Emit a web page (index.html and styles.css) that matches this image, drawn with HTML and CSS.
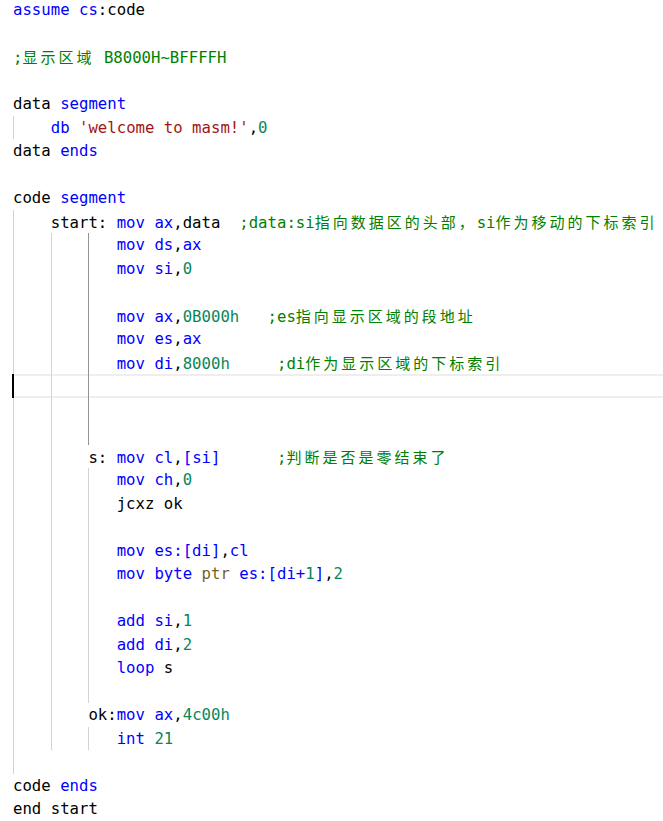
FILE: index.html
```html
<!DOCTYPE html>
<html>
<head>
<meta charset="utf-8">
<link rel="stylesheet" href="styles.css">
</head>
<body>
<div class="editor">
<div class="ln"><span class="t"><span class="k">assume</span> <span class="k">cs</span>:code</span></div>
<div class="ln"></div>
<div class="ln"><span class="t"><span class="c">;<span class="zh">显示区域</span> B8000H~BFFFFH</span></span></div>
<div class="ln"></div>
<div class="ln"><span class="t">data <span class="k">segment</span></span></div>
<div class="ln"><i class="g"></i><span class="t"><span class="k">db</span> <span class="s">'welcome to masm!'</span>,<span class="n">0</span></span></div>
<div class="ln"><span class="t">data <span class="k">ends</span></span></div>
<div class="ln"></div>
<div class="ln"><span class="t">code <span class="k">segment</span></span></div>
<div class="ln"><i class="g"></i><span class="t">start: <span class="k">mov</span> <span class="k">ax</span>,data  <span class="c">;data:si<span class="zh">指向数据区的头部，</span>si<span class="zh">作为移动的下标索引</span></span></span></div>
<div class="ln"><i class="g"></i><i class="g"></i><i class="g g3 a"></i><span class="t"><span class="k">mov</span> <span class="k">ds</span>,<span class="k">ax</span></span></div>
<div class="ln"><i class="g"></i><i class="g"></i><i class="g g3 a"></i><span class="t"><span class="k">mov</span> <span class="k">si</span>,<span class="n">0</span></span></div>
<div class="ln"><i class="g"></i><i class="g"></i><i class="g a"></i></div>
<div class="ln"><i class="g"></i><i class="g"></i><i class="g g3 a"></i><span class="t"><span class="k">mov</span> <span class="k">ax</span>,<span class="n">0B000h</span>   <span class="c">;es<span class="zh">指向显示区域的段地址</span></span></span></div>
<div class="ln"><i class="g"></i><i class="g"></i><i class="g g3 a"></i><span class="t"><span class="k">mov</span> <span class="k">es</span>,<span class="k">ax</span></span></div>
<div class="ln"><i class="g"></i><i class="g"></i><i class="g g3 a"></i><span class="t"><span class="k">mov</span> <span class="k">di</span>,<span class="n">8000h</span>     <span class="c">;di<span class="zh">作为显示区域的下标索引</span></span></span></div>
<div class="ln cur"><i class="g caret"></i><i class="g"></i><i class="g a"></i></div>
<div class="ln"><i class="g"></i><i class="g"></i><i class="g a"></i></div>
<div class="ln"><i class="g"></i><i class="g"></i><i class="g a"></i></div>
<div class="ln"><i class="g"></i><i class="g"></i><span class="t">s: <span class="k">mov</span> <span class="k">cl</span>,<span class="k">[si]</span>      <span class="c">;<span class="zh">判断是否是零结束了</span></span></span></div>
<div class="ln"><i class="g"></i><i class="g"></i><i class="g g3"></i><span class="t"><span class="k">mov</span> <span class="k">ch</span>,<span class="n">0</span></span></div>
<div class="ln"><i class="g"></i><i class="g"></i><i class="g g3"></i><span class="t">jcxz ok</span></div>
<div class="ln"><i class="g"></i><i class="g"></i><i class="g"></i></div>
<div class="ln"><i class="g"></i><i class="g"></i><i class="g g3"></i><span class="t"><span class="k">mov</span> <span class="k">es:[di]</span>,<span class="k">cl</span></span></div>
<div class="ln"><i class="g"></i><i class="g"></i><i class="g g3"></i><span class="t"><span class="k">mov</span> <span class="k">byte</span> <span class="p">ptr</span> <span class="k">es:[di+</span><span class="n">1</span><span class="k">]</span>,<span class="n">2</span></span></div>
<div class="ln"><i class="g"></i><i class="g"></i><i class="g"></i></div>
<div class="ln"><i class="g"></i><i class="g"></i><i class="g g3"></i><span class="t"><span class="k">add</span> <span class="k">si</span>,<span class="n">1</span></span></div>
<div class="ln"><i class="g"></i><i class="g"></i><i class="g g3"></i><span class="t"><span class="k">add</span> <span class="k">di</span>,<span class="n">2</span></span></div>
<div class="ln"><i class="g"></i><i class="g"></i><i class="g g3"></i><span class="t"><span class="k">loop</span> s</span></div>
<div class="ln"><i class="g"></i><i class="g"></i><i class="g"></i></div>
<div class="ln"><i class="g"></i><i class="g"></i><span class="t">ok:<span class="k">mov</span> <span class="k">ax</span>,<span class="n">4c00h</span></span></div>
<div class="ln"><i class="g"></i><i class="g"></i><i class="g g3"></i><span class="t"><span class="k">int</span> <span class="n">21</span></span></div>
<div class="ln"><i class="g"></i></div>
<div class="ln"><span class="t">code <span class="k">ends</span></span></div>
<div class="ln"><span class="t">end start</span></div>
</div>
</body>
</html>
```
FILE: styles.css
```css
html, body {
  margin: 0;
  padding: 0;
  background: #ffffff;
  overflow: hidden;
}
.editor {
  margin-top: -2px;
  padding-left: 13px;
  font-family: "DejaVu Sans Mono", "Liberation Mono", monospace;
  font-size: 15.66px;
  color: #000000;
}
.ln {
  display: flex;
  height: 23.5px;
  line-height: 23.5px;
  white-space: pre;
}
.t {
  flex: none;
}
.g {
  flex: none;
  display: block;
  width: 4ch;
  box-sizing: border-box;
  border-left: 1px solid #d3d3d3;
}
.g3 {
  width: 3ch;
}
.a {
  border-left-color: #939393;
}
.cur {
  box-shadow: inset 0 2px 0 #eeeeee, inset 0 -2px 0 #eeeeee;
}
.caret {
  border-left: 2px solid #000000;
  margin-left: -1px;
  width: calc(4ch + 1px);
}
.k { color: #0000ff; }
.n { color: #098658; }
.s { color: #a31515; }
.c { color: #008000; }
.p { color: #795e26; }
.zh {
  font-family: "Noto Sans CJK SC", sans-serif;
  font-size: 15px;
  letter-spacing: 3px;
}
```
